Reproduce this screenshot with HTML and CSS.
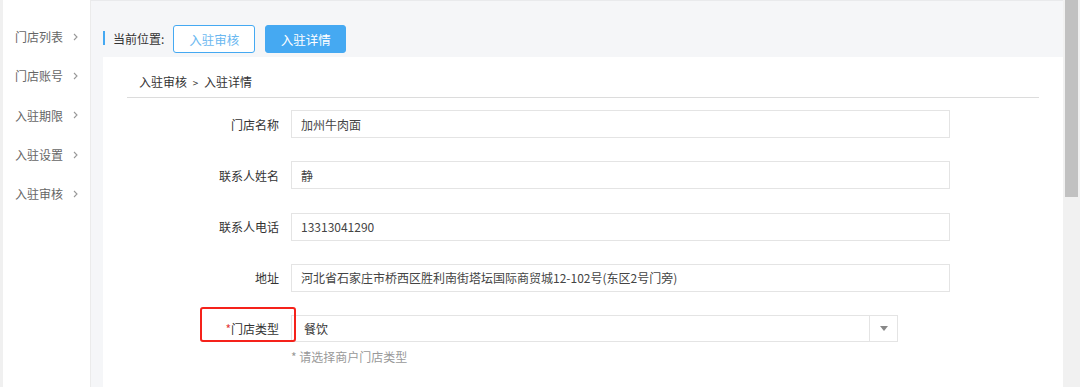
FILE: index.html
```html
<!DOCTYPE html>
<html lang="zh-CN">
<head>
  <meta charset="UTF-8" />
  <meta name="viewport" content="width=device-width, initial-scale=1.0" />
  <title>入驻详情</title>
  <link rel="stylesheet" href="styles.css">
</head>
<body>
  <aside class="sidebar">
    <ul class="menu">
      <li class="menu-item">门店列表 <svg class="chevron" viewBox="0 0 5 8"><path d="M1 1l3 3-3 3"/></svg></li>
      <li class="menu-item">门店账号 <svg class="chevron" viewBox="0 0 5 8"><path d="M1 1l3 3-3 3"/></svg></li>
      <li class="menu-item">入驻期限 <svg class="chevron" viewBox="0 0 5 8"><path d="M1 1l3 3-3 3"/></svg></li>
      <li class="menu-item">入驻设置 <svg class="chevron" viewBox="0 0 5 8"><path d="M1 1l3 3-3 3"/></svg></li>
      <li class="menu-item">入驻审核 <svg class="chevron" viewBox="0 0 5 8"><path d="M1 1l3 3-3 3"/></svg></li>
    </ul>
  </aside>

  <main class="main">
    <div class="location">
      <span class="location-mark"></span>
      <span class="location-label">当前位置:</span>
      <button class="tab">入驻审核</button>
      <button class="tab tab-active">入驻详情</button>
    </div>

    <section class="panel">
      <div class="crumbs">入驻审核 <span class="crumb-sep">&gt;</span> 入驻详情</div>

      <form class="form">
        <div class="form-row">
          <label class="form-label">门店名称</label>
          <input class="form-input" type="text" value="加州牛肉面" />
        </div>
        <div class="form-row">
          <label class="form-label">联系人姓名</label>
          <input class="form-input" type="text" value="静" />
        </div>
        <div class="form-row">
          <label class="form-label">联系人电话</label>
          <input class="form-input" type="text" value="13313041290" />
        </div>
        <div class="form-row">
          <label class="form-label">地址</label>
          <input class="form-input" type="text" value="河北省石家庄市桥西区胜利南街塔坛国际商贸城12-102号(东区2号门旁)" />
        </div>
        <div class="form-row form-row-select">
          <label class="form-label"><span class="required">*</span>门店类型</label>
          <div class="form-select">
            <span class="select-value">餐饮</span>
            <span class="select-arrow"><svg viewBox="0 0 8 5"><path d="M0 0h8L4 5z"/></svg></span>
          </div>
          <span class="highlight"></span>
        </div>
        <p class="form-hint">* 请选择商户门店类型</p>
      </form>
    </section>
  </main>

  <div class="scrollbar"><div class="scrollbar-thumb"></div></div>
</body>
</html>
```

FILE: styles.css
```css
:root {
  --blue: #45a9f2;
  --border: #e4e4e4;
  --text: #333;
  --muted: #999;
}

* {
  box-sizing: border-box;
}

body {
  margin: 0;
  height: 387px;
  overflow: hidden;
  display: flex;
  font-family: "Noto Sans CJK SC", "Liberation Sans", sans-serif;
  font-size: 12px;
  color: var(--text);
  background: #f5f6f8;
}

/* sidebar */
.sidebar {
  width: 91px;
  flex-shrink: 0;
  background: #fff;
  border-left: 3px solid #f0f0f0;
  border-right: 1px solid #ebebeb;
}

.menu {
  list-style: none;
  margin: 0;
  padding: 17px 0 0 12px;
}

.menu-item {
  height: 39.3px;
  line-height: 39px;
  color: #666;
  display: flex;
  align-items: center;
}

.chevron {
  width: 5px;
  height: 8px;
  margin-left: 10px;
  fill: none;
  stroke: #999;
  stroke-width: 1.1;
}

/* main */
.main {
  flex: 1;
  border-top: 1px solid #e9eaec;
  padding-left: 12px;
  display: flex;
  flex-direction: column;
}

.location {
  height: 56px;
  padding-top: 24px;
  display: flex;
  align-items: flex-start;
}

.location-mark {
  width: 2px;
  height: 14px;
  margin-top: 6px;
  background: var(--blue);
}

.location-label {
  margin-left: 8px;
  line-height: 28px;
  color: #333;
}

.tab {
  height: 28px;
  width: 82px;
  margin-left: 9px;
  padding: 0;
  border: 1px solid var(--blue);
  border-radius: 3px;
  background: #fff;
  color: #6bb8f0;
  font-family: inherit;
  font-size: 12.5px;
}

.tab-active {
  width: 81px;
  margin-left: 10px;
  background: var(--blue);
  color: #fff;
}

.panel {
  flex: 1;
  background: #fff;
}

.crumbs {
  margin: 0 24px;
  height: 41px;
  padding: 16px 0 0 12px;
  line-height: 18px;
  border-bottom: 1px solid #dcdcdc;
  color: #333;
}

.crumb-sep {
  font-size: 10px;
  margin: 0 3px;
}

/* form */
.form {
  margin: 0;
  padding: 12px 0 0 24px;
}

.form-row {
  position: relative;
  display: flex;
  align-items: center;
  height: 28px;
  margin-bottom: 23.3px;
}

.form-label {
  width: 152px;
  margin-right: 12px;
  text-align: right;
  color: #333;
}

.required {
  color: #e4393c;
}

.form-input {
  width: 659px;
  height: 28px;
  padding: 0 9px;
  border: 1px solid var(--border);
  font-family: inherit;
  font-size: 12px;
  color: #444;
  outline: none;
}

.form-row-select {
  height: 27px;
  margin-bottom: 0;
}

.form-select {
  width: 607px;
  height: 27px;
  border: 1px solid var(--border);
  display: flex;
  align-items: center;
}

.select-value {
  flex: 1;
  padding-left: 12px;
  color: #333;
}

.select-arrow {
  width: 28px;
  height: 100%;
  border-left: 1px solid var(--border);
  display: flex;
  align-items: center;
  justify-content: center;
}

.select-arrow svg {
  width: 8px;
  height: 5px;
  fill: #888;
}

.highlight {
  position: absolute;
  left: 73px;
  top: -8px;
  width: 96px;
  height: 35px;
  border: 2px solid #f5221b;
  border-radius: 3px;
  pointer-events: none;
}

.form-hint {
  margin: 6px 0 0 164px;
  line-height: 18px;
  color: var(--muted);
}

/* fake scrollbar */
.scrollbar {
  width: 17px;
  flex-shrink: 0;
  background: #f1f1f1;
  padding: 0 2px 0 2px;
}

.scrollbar-thumb {
  height: 197px;
  background: #c1c1c1;
}
```
